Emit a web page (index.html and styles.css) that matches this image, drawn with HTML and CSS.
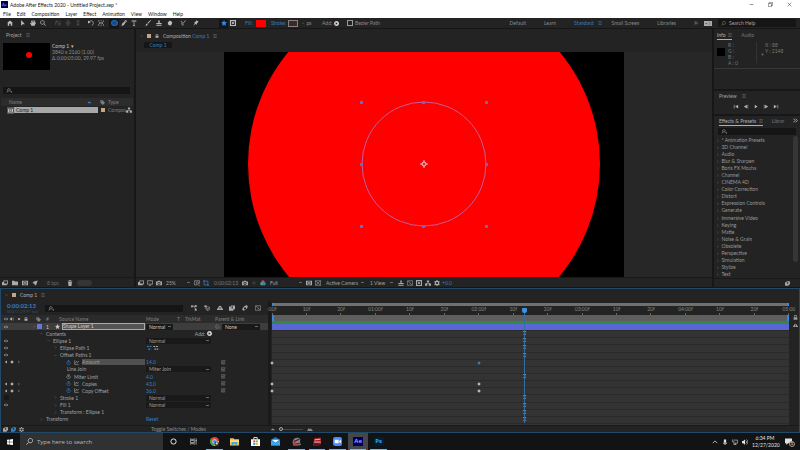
FILE: index.html
```html
<!DOCTYPE html>
<html lang="en">
<head>
<meta charset="utf-8">
<title>Adobe After Effects 2020 - Untitled Project.aep *</title>
<link rel="stylesheet" href="styles.css">
</head>
<body>
<svg class="defs" aria-hidden="true">
  <symbol id="home" viewBox="0 0 16 16"><path d="M8 1 0 8h2v7h4v-5h4v5h4V8h2z"/></symbol>
  <symbol id="arrow" viewBox="0 0 16 16"><path d="M3 0v15l4-4h6z"/></symbol>
  <symbol id="hand" viewBox="0 0 16 16"><path d="M4 15 0 8l2-1 2 2-1-7 2-.5L6.500 7 7 0h2l.5 7L12 1l2 .6L12.500 8 14 6l2 1-4 8z"/></symbol>
  <symbol id="search" viewBox="0 0 16 16"><path d="M10 1a5 5 0 1 0 .1 0zM6 10l-5 5" fill="none" stroke="currentColor" stroke-width="1.700"/></symbol>
  <symbol id="glass" viewBox="0 0 16 16"><path d="M6.500 1.500a5 5 0 1 0 .1 0zM10 10l5 5" fill="none" stroke="currentColor" stroke-width="2"/></symbol>
  <symbol id="find" viewBox="0 0 20 16"><path d="M8 2a4 4 0 1 0 .1 0zM5 9l-4 5" fill="none" stroke="currentColor" stroke-width="2"/><path d="M12 11h7l-3.500 4z"/></symbol>
  <symbol id="orbit" viewBox="0 0 16 16"><path d="M2 13V4h5M5 1v6M10 3c5 0 5 8 1 8M9 9l2 5 3-3z" fill="none" stroke="currentColor" stroke-width="2"/></symbol>
  <symbol id="cross" viewBox="0 0 16 16"><path d="M8 1v14M1 8h14M5 4l3-3 3 3M5 12l3 3 3-3" fill="none" stroke="currentColor" stroke-width="2"/></symbol>
  <symbol id="down" viewBox="0 0 16 16"><path d="M8 1v13M4 10l4 4 4-4M4 3h8" fill="none" stroke="currentColor" stroke-width="2"/></symbol>
  <symbol id="rotate" viewBox="0 0 16 16"><path d="M3 5c4-5 12-3 11 4 0 3-2 4-4 5" fill="none" stroke="currentColor" stroke-width="2"/><path d="M0 1v8l7-3z"/></symbol>
  <symbol id="pan" viewBox="0 0 16 16"><path d="M1 4V2h3M7 2h3M13 2h2v3M1 11v3h3M7 14h3M13 14h2v-3M4 8h8M6 5 3 8l3 3M10 5l3 3-3 3" fill="none" stroke="currentColor" stroke-width="1.700"/></symbol>
  <symbol id="pen" viewBox="0 0 16 16"><path d="m9 1 5 5-3 1-3 6-7 3 3-8 5-3zM10 0l2-1 5 5-2 1z"/></symbol>
  <symbol id="type" viewBox="0 0 16 16"><path d="M2 1h12v4h-1.500L12 3H9v10.500h2V15H5v-1.500h2V3H4l-.5 2H2z"/></symbol>
  <symbol id="brush" viewBox="0 0 16 16"><path d="m15 0 1 1-8 9-2-2zM5 9l2 2c0 3-3 4-6 4 2-2 1-5 4-6z"/></symbol>
  <symbol id="stamp" viewBox="0 0 16 16"><path d="M6 1h4v4l-1 3h6v3H1V8h6L6 5zM1 13h14v2H1z"/></symbol>
  <symbol id="eraser" viewBox="0 0 16 16"><path d="m7 1 7 4-1 6-5 4-6-4 1-5z"/></symbol>
  <symbol id="roto" viewBox="0 0 16 16"><path d="M2 3c3 0 4 3 3 6s1 5 5 4M15 1 7 10" fill="none" stroke="currentColor" stroke-width="2"/></symbol>
  <symbol id="pin" viewBox="0 0 16 16"><path d="m9 0 6 5-2 1-3 4 0 3-3-3-6 5 4-7-2-3h3l3-3z"/></symbol>
  <symbol id="star" viewBox="0 0 16 16"><path d="m8 0 2.300 5.400L16 6l-4.300 3.800L13 16l-5-3.200L3 16l1.300-6.200L0 6l5.700-.6z"/></symbol>
  <symbol id="mask" viewBox="0 0 16 16"><path fill-rule="evenodd" d="M0 0h16v16H0zM3 3v10h10V3z"/><circle cx="8" cy="8" r="3"/></symbol>
  <symbol id="add" viewBox="0 0 16 16"><path fill-rule="evenodd" d="M8 0a8 8 0 1 0 .1 0zM5.500 4v8l6-4z"/></symbol>
  <symbol id="menu" viewBox="0 0 16 16"><path d="M1 2h14v2H1zM1 7h14v2H1zM1 12h14v2H1z"/></symbol>
  <symbol id="more" viewBox="0 0 16 16"><path d="m1 2 6 6-6 6M8 2l6 6-6 6" fill="none" stroke="currentColor" stroke-width="3"/></symbol>
  <symbol id="open" viewBox="0 0 16 16"><path d="m2 5 6 6 6-6" fill="none" stroke="currentColor" stroke-width="2"/></symbol>
  <symbol id="shut" viewBox="0 0 16 16"><path d="m5 2 6 6-6 6" fill="none" stroke="currentColor" stroke-width="2"/></symbol>
  <symbol id="up" viewBox="0 0 16 16"><path d="m2 11 6-6 6 6" fill="none" stroke="currentColor" stroke-width="2"/></symbol>
  <symbol id="tag" viewBox="0 0 16 16"><path fill-rule="evenodd" d="M1 1h7l8 8-7 7-8-8zM4 3v3h3z"/></symbol>
  <symbol id="tree" viewBox="0 0 16 16"><path d="M5 1h6v5H5zM0 10h6v5H0zM10 10h6v5h-6zM7 6h2v2h5v2h-2V9H4v1H2V8h5z"/></symbol>
  <symbol id="comp" viewBox="0 0 16 16"><path fill-rule="evenodd" d="M0 2h16v12H0zM4 4v8h8V4z"/><circle cx="8" cy="8" r="2.500"/></symbol>
  <symbol id="footage" viewBox="0 0 16 16"><path fill-rule="evenodd" d="M4 1h12v10h-3v3H0V5h4zM6 3v6h8V3z"/></symbol>
  <symbol id="folder" viewBox="0 0 16 16"><path d="M0 2h6l2 2h8v10H0z"/></symbol>
  <symbol id="rocket" viewBox="0 0 16 16"><path d="M15 1 5 4 1 8l4 1 2 2 1 4 4-4z"/></symbol>
  <symbol id="trash" viewBox="0 0 16 16"><path d="M2 2h4V0h4v2h4v2H2zM3 5h10l-1 11H4z"/></symbol>
  <symbol id="screen" viewBox="0 0 16 16"><path d="M1 2h14v9H1zM5 15h6" fill="none" stroke="currentColor" stroke-width="2"/></symbol>
  <symbol id="camera" viewBox="0 0 16 16"><path fill-rule="evenodd" d="M0 4h4l2-2h4l2 2h4v10H0zM8 5a4 4 0 1 0 .1 0z"/><circle cx="8" cy="9" r="2"/></symbol>
  <symbol id="grid" viewBox="0 0 16 16"><path d="M1 2h14v12H1zM1 2l14 12M15 2 1 14" fill="none" stroke="currentColor" stroke-width="1.500"/></symbol>
  <symbol id="region" viewBox="0 0 16 16"><path d="M3 0v13h13M0 3h13v13" fill="none" stroke="currentColor" stroke-width="2"/></symbol>
  <symbol id="zoombox" viewBox="0 0 16 16"><path d="M15 10V2H1v11h7M9 5a3 3 0 1 0 .1 0M10 11l5 5" fill="none" stroke="currentColor" stroke-width="1.700"/></symbol>
  <symbol id="rgb" viewBox="0 0 16 16"><circle cx="8" cy="5" r="4.500" fill="#d94343"/><circle cx="5" cy="10" r="4.500" fill="#3fa86b"/><circle cx="11" cy="10" r="4.500" fill="#4a76d2"/></symbol>
  <symbol id="gear" viewBox="0 0 16 16"><path fill-rule="evenodd" d="M6.500 0h3v2l2 1 2-1 2 3-2 2v2l2 2-2 3-2-1-2 1v2h-3v-2l-2-1-2 1-2-3 2-2V7L.5 5l2-3 2 1 2-1zM8 5a3 3 0 1 0 .1 0z"/></symbol>
  <symbol id="eye" viewBox="0 0 16 16"><path fill-rule="evenodd" d="M0 8c4-7 12-7 16 0-4 7-12 7-16 0zm8-4a4 4 0 1 0 .1 0z"/><circle cx="8" cy="8" r="2"/></symbol>
  <symbol id="sound" viewBox="0 0 16 16"><path d="M0 5h3l5-4v14l-5-4H0z"/><path d="M10 4c3 2 3 6 0 8M12 1c5 4 5 10 0 14" fill="none" stroke="currentColor" stroke-width="1.500"/></symbol>
  <symbol id="lock" viewBox="0 0 16 16"><path fill-rule="evenodd" d="M3 7V4c0-5 10-5 10 0v3h1v8H2V7zM5 7h6V4c0-2.500-6-2.500-6 0z"/></symbol>
  <symbol id="dot" viewBox="0 0 16 16"><circle cx="8" cy="8" r="4.500"/></symbol>
  <symbol id="diamond" viewBox="0 0 16 16"><path d="m8 1 7 7-7 7-7-7z"/></symbol>
  <symbol id="prev" viewBox="0 0 16 16"><path d="M12 2v12L3 8z"/></symbol>
  <symbol id="next" viewBox="0 0 16 16"><path d="M4 2v12l9-6z"/></symbol>
  <symbol id="first" viewBox="0 0 16 16"><path d="M1 2h2v12H1zM15 2v12L5 8z"/></symbol>
  <symbol id="last" viewBox="0 0 16 16"><path d="M13 2h2v12h-2zM1 2v12l10-6z"/></symbol>
  <symbol id="stepb" viewBox="0 0 16 16"><path d="M13 2h2v12h-2zM11 2v12L1 8z"/></symbol>
  <symbol id="stepf" viewBox="0 0 16 16"><path d="M1 2h2v12H1zM5 2v12l10-6z"/></symbol>
  <symbol id="watch" viewBox="0 0 16 16"><path d="M8 4a5.500 5.500 0 1 0 .1 0M5 1h6M8 6v4" fill="none" stroke="currentColor" stroke-width="2"/></symbol>
  <symbol id="graph" viewBox="0 0 16 16"><path d="M2 1v13h13M5 10l3-6 3 4 4-5" fill="none" stroke="currentColor" stroke-width="2"/></symbol>
  <symbol id="link" viewBox="0 0 16 16"><path d="M8 4a4 4 0 1 0 4 4c0-8-11-7-11 0 0 9 13 9 14 1" fill="none" stroke="currentColor" stroke-width="1.700"/></symbol>
  <symbol id="expr" viewBox="0 0 16 16"><path d="M12 2H2v11h10V9M5 6h5v4H5zM10 6l5-4" fill="none" stroke="currentColor" stroke-width="2"/></symbol>
  <symbol id="flow" viewBox="0 0 16 16"><path d="M1 3h7l5 9M8 3h5" fill="none" stroke="currentColor" stroke-width="2"/><path d="M0 1h5v5H0zM11 0h4v5h-4zM10 10h5v5h-5z"/></symbol>
  <symbol id="cube" viewBox="0 0 16 16"><path d="M1 1h6v5H1z"/><path d="m10 4 5 3v5l-5 3-5-3V7zM5 7l5 3 5-3M10 10v5" fill="none" stroke="currentColor" stroke-width="1.500"/></symbol>
  <symbol id="shy" viewBox="0 0 16 16"><path fill-rule="evenodd" d="M0 13V9h3c0-9 10-9 10 0h3v4zM7 5v6h2V5z"/></symbol>
  <symbol id="blend" viewBox="0 0 16 16"><path fill-rule="evenodd" d="M5 1h11v10h-4v4H0V4h5zM7 3v6h3V3z"/></symbol>
  <symbol id="blur" viewBox="0 0 16 16"><path fill-rule="evenodd" d="M10 1c6-1 6 4 4 7s-7 7-10 7-4-4-2-7 5-6 8-7zM8 6a3 3 0 1 0 .1 0z"/></symbol>
  <symbol id="editor" viewBox="0 0 16 16"><path d="M1 2h14v12H1zM3 4c6 0 4 8 10 8" fill="none" stroke="currentColor" stroke-width="1.500"/></symbol>
  <symbol id="hill" viewBox="0 0 16 16"><path d="m0 13 5-8 3 4 2-3 6 7z"/></symbol>
  <symbol id="close" viewBox="0 0 16 16"><path d="m2 2 12 12M14 2 2 14" fill="none" stroke="currentColor" stroke-width="1.500"/></symbol>
  <symbol id="min" viewBox="0 0 16 16"><path d="M2 7.500h12v1.500H2z"/></symbol>
  <symbol id="restore" viewBox="0 0 16 16"><path d="M1 5h10v10H1zM4 5V1h11v10h-4" fill="none" stroke="currentColor" stroke-width="1.500"/></symbol>
  <symbol id="path" viewBox="0 0 32 16"><path d="M0 4h12M3 11h8" stroke="#3a80c4" stroke-width="3" stroke-dasharray="5 2"/><path d="M17 4h13M20 11h10" stroke="#aaa" stroke-width="3" stroke-dasharray="5 2"/></symbol>
</svg>

<div class="app">
  <header class="chrome">
    <div class="titlebar">
      <span class="logo">Ae</span>
      <h1>Adobe After Effects 2020 - Untitled Project.aep *</h1>
      <div class="window-controls">
        <button aria-label="Minimize"><svg><use href="#min"/></svg></button>
        <button aria-label="Restore"><svg><use href="#restore"/></svg></button>
        <button aria-label="Close"><svg><use href="#close"/></svg></button>
      </div>
    </div>
    <nav class="menubar">
      <button>File</button><button>Edit</button><button>Composition</button><button>Layer</button><button>Effect</button><button>Animation</button><button>View</button><button>Window</button><button>Help</button>
    </nav>
  </header>

  <div class="toolbar">
    <div class="tools"><button aria-label="Home"><svg><use href="#home"/></svg></button></div>
    <div class="tools">
      <button aria-label="Selection"><svg><use href="#arrow"/></svg></button>
      <button aria-label="Hand"><svg><use href="#hand"/></svg></button>
      <button aria-label="Zoom"><svg><use href="#glass"/></svg></button>
    </div>
    <div class="tools dim wide-left">
      <button aria-label="Orbit"><svg><use href="#orbit"/></svg></button>
      <button aria-label="Track"><svg><use href="#cross"/></svg></button>
      <button aria-label="Dolly"><svg><use href="#down"/></svg></button>
    </div>
    <div class="tools">
      <button aria-label="Rotate"><svg><use href="#rotate"/></svg></button>
      <button aria-label="Pan behind"><svg><use href="#pan"/></svg></button>
    </div>
    <div class="tools">
      <button class="chosen" aria-label="Ellipse"><i class="ellipse"></i></button>
      <button aria-label="Pen"><svg><use href="#pen"/></svg></button>
      <button aria-label="Type"><svg><use href="#type"/></svg></button>
    </div>
    <div class="tools spaced">
      <button aria-label="Brush"><svg><use href="#brush"/></svg></button>
      <button aria-label="Clone stamp"><svg><use href="#stamp"/></svg></button>
      <button aria-label="Eraser"><svg><use href="#eraser"/></svg></button>
    </div>
    <div class="tools far">
      <button aria-label="Roto brush"><svg><use href="#roto"/></svg></button>
      <button aria-label="Puppet pin"><svg><use href="#pin"/></svg></button>
    </div>
    <div class="shape-options">
      <div class="tools">
        <button class="chosen blue" aria-label="Tool creates shape"><svg><use href="#star"/></svg></button>
        <button aria-label="Tool creates mask"><svg><use href="#mask"/></svg></button>
      </div>
      <button class="blue fill-label">Fill:</button><button class="swatch red" aria-label="Fill color"></button>
      <button class="blue stroke-label">Stroke:</button><button class="swatch" aria-label="Stroke color"></button>
      <span class="px">- &nbsp;px</span>
      <button class="add">Add: <svg><use href="#add"/></svg></button>
      <label class="bezier"><input type="checkbox"> Bezier Path</label>
    </div>
    <nav class="workspaces">
      <button>Default</button><button>Learn</button><button class="blue">Standard</button><svg class="blue"><use href="#menu"/></svg><button>Small Screen</button><button>Libraries</button><svg><use href="#more"/></svg><span class="badge">▪ ≡</span>
    </nav>
    <label class="help-search"><svg><use href="#search"/></svg><input type="text" placeholder="Search Help" aria-label="Search Help"></label>
  </div>

  <main class="workspace">
    <section class="panel project">
      <h2 class="tab">Project <svg><use href="#menu"/></svg></h2>
      <div class="summary">
        <div class="thumb"><i></i></div>
        <p><strong>Comp 1 ▾</strong><br>3840 x 2160 (1.00)<br>Δ 0:00:05:00, 29.97 fps</p>
      </div>
      <label class="find"><svg><use href="#find"/></svg><input type="text" aria-label="Search project"></label>
      <table class="files">
        <thead><tr><th class="name-col">Name</th><th class="sort"><svg><use href="#hill"/></svg></th><th class="mark"><svg><use href="#tag"/></svg></th><th>Type</th><th class="used"></th></tr></thead>
        <tbody><tr><td colspan="2"><div class="file"><svg><use href="#comp"/></svg><span>Comp 1</span></div></td><td class="mark"><i class="sand"></i></td><td>Compos</td><td class="used"><svg><use href="#tree"/></svg></td></tr></tbody>
      </table>
      <div class="panel-foot">
        <button aria-label="Interpret footage"><svg><use href="#footage"/></svg></button>
        <button aria-label="New folder"><svg><use href="#folder"/></svg></button>
        <button aria-label="New composition"><svg><use href="#comp"/></svg></button>
        <button aria-label="Project settings"><svg><use href="#rocket"/></svg></button>
        <button class="bpc">8 bpc</button>
        <button aria-label="Delete"><svg><use href="#trash"/></svg></button>
        <i class="scroll-thumb"></i>
      </div>
    </section>

    <section class="panel composition">
      <div class="comp-tab"><span class="faint">×</span><i class="sand"></i><svg><use href="#lock"/></svg><h2>Composition <span class="blue">Comp 1</span></h2><svg class="small"><use href="#menu"/></svg></div>
      <button class="crumb blue">Comp 1</button>
      <div class="viewer">
        <svg viewBox="0 0 400 225" class="frame" role="img" aria-label="Red circle on black with a selected ellipse path">
          <rect width="400" height="225" fill="#000"/>
          <circle cx="200" cy="112" r="176" fill="#f00"/>
          <circle cx="200" cy="112" r="62" fill="none" stroke="#c060a0"/>
          <g fill="#7a62c0"><path d="M136 49h3v3h-3zM198 49h3v3h-3zM261 49h3v3h-3zM136 111h3v3h-3zM261 111h3v3h-3zM136 173h3v3h-3zM198 173h3v3h-3zM261 173h3v3h-3z"/></g>
          <path d="M200 108v8M196 112h8" stroke="#e8b8c8"/><circle cx="200" cy="112" r="2" fill="#c33" stroke="#e8c8d0"/>
        </svg>
      </div>
      <div class="viewbar">
        <div class="icons"><svg><use href="#footage"/></svg><svg><use href="#screen"/></svg><svg><use href="#camera"/></svg></div>
        <select class="zoom" aria-label="Magnification"><option>25%</option></select>
        <div class="icons"><svg><use href="#zoombox"/></svg><svg class="blue"><use href="#region"/></svg></div>
        <span class="time">0:00:02:13</span>
        <div class="icons"><svg><use href="#camera"/></svg><svg class="faint"><use href="#dot"/></svg><svg><use href="#rgb"/></svg></div>
        <select class="resolution" aria-label="Resolution"><option>Full</option></select>
        <div class="icons"><svg><use href="#comp"/></svg><svg><use href="#grid"/></svg></div>
        <select class="view" aria-label="3D view"><option>Active Camera</option></select>
        <select class="count" aria-label="Views"><option>1 View</option></select>
        <div class="icons"><svg><use href="#stamp"/></svg><svg><use href="#editor"/></svg><svg><use href="#mask"/></svg><svg><use href="#tree"/></svg><svg><use href="#gear"/></svg></div>
        <span class="blue">+0.0</span>
      </div>
    </section>

    <aside class="side">
      <section class="panel info">
        <div class="tabs"><h2 class="on">Info &nbsp;<svg><use href="#menu"/></svg></h2><button>Audio</button></div>
        <div class="readout"><i class="black"></i><p>R :<br>G :<br>B :<br>A : 0</p><p class="xy">X : 88<br>Y : 2148<b>+</b></p></div>
      </section>
      <section class="panel preview">
        <h2>Preview <svg><use href="#menu"/></svg></h2>
        <div class="transport">
          <button aria-label="First frame"><svg><use href="#first"/></svg></button><button aria-label="Previous frame"><svg><use href="#stepb"/></svg></button><button aria-label="Play"><svg><use href="#next"/></svg></button><button aria-label="Next frame"><svg><use href="#stepf"/></svg></button><button aria-label="Last frame"><svg><use href="#last"/></svg></button>
        </div>
      </section>
      <section class="panel effects">
        <div class="tabs"><h2 class="on">Effects &amp; Presets &nbsp;<svg><use href="#menu"/></svg></h2><button>Librar</button><svg class="more"><use href="#more"/></svg></div>
        <label class="find"><svg><use href="#find"/></svg><input type="text" aria-label="Search effects"></label>
        <div class="effect-scroll">
        <ul>
          <li>* Animation Presets</li><li>3D Channel</li><li>Audio</li><li>Blur &amp; Sharpen</li><li>Boris FX Mocha</li><li>Channel</li><li>CINEMA 4D</li><li>Color Correction</li><li>Distort</li><li>Expression Controls</li><li>Generate</li><li>Immersive Video</li><li>Keying</li><li>Matte</li><li>Noise &amp; Grain</li><li>Obsolete</li><li>Perspective</li><li>Simulation</li><li>Stylize</li><li>Text</li>
        </ul>
        <i class="bar"></i>
        </div>
        <div class="effects-foot"><svg><use href="#blend"/></svg></div>
      </section>
    </aside>
  </main>

  <section class="timeline">
    <div class="comp-tab"><span class="faint">×</span><i class="sand"></i><h2>Comp 1</h2><svg class="small"><use href="#menu"/></svg></div>
    <div class="timeline-body">
      <div class="outline">
        <div class="controls">
          <div class="clock"><b>0:00:02:13</b><small>00073 (29.97 fps)</small></div>
          <label class="find"><svg><use href="#find"/></svg><input type="text" aria-label="Search layers"></label>
          <div class="switches"><svg><use href="#flow"/></svg><svg><use href="#cube"/></svg><svg><use href="#shy"/></svg><svg><use href="#blend"/></svg><svg><use href="#blur"/></svg><svg><use href="#editor"/></svg></div>
        </div>
        <div class="row head">
          <div class="keys"><svg><use href="#eye"/></svg><svg><use href="#sound"/></svg><svg><use href="#dot"/></svg><svg><use href="#lock"/></svg></div>
          <div class="name"><svg><use href="#tag"/></svg><span class="num">#</span><span>Source Name</span></div>
          <div class="mode head-mode"><span>Mode</span><span>T</span><span>TrkMat</span></div>
          <div class="parent">Parent &amp; Link</div>
        </div>
        <div class="rows">
          <div class="row layer">
            <div class="keys"><svg><use href="#eye"/></svg></div>
            <div class="name"><svg class="twirl"><use href="#open"/></svg><i class="label"></i><span class="num">1</span><svg><use href="#star"/></svg><span class="title">Shape Layer 1</span></div>
            <div class="mode"><select class="short" aria-label="Blending mode"><option>Normal</option></select></div>
            <div class="parent"><svg class="muted"><use href="#link"/></svg><select aria-label="Parent"><option>None</option></select></div>
          </div>
          <div class="row"><div class="keys"></div><div class="name d1"><svg class="twirl"><use href="#open"/></svg>Contents</div><div class="mode add-cell"><button>Add: <svg><use href="#add"/></svg></button></div><div class="parent"></div></div>
          <div class="row"><div class="keys"><svg><use href="#eye"/></svg></div><div class="name d2"><svg class="twirl"><use href="#open"/></svg>Ellipse 1</div><div class="mode"><select aria-label="Ellipse mode"><option>Normal</option></select></div><div class="parent"></div></div>
          <div class="row"><div class="keys"><svg><use href="#eye"/></svg></div><div class="name d3"><svg class="twirl"><use href="#shut"/></svg>Ellipse Path 1</div><div class="mode"><svg class="direction"><use href="#path"/></svg></div><div class="parent"></div></div>
          <div class="row"><div class="keys"><svg><use href="#eye"/></svg></div><div class="name d3"><svg class="twirl"><use href="#open"/></svg>Offset Paths 1</div><div class="mode"></div><div class="parent"></div></div>
          <div class="row"><div class="keys"><svg><use href="#prev"/></svg><svg><use href="#diamond"/></svg><svg class="faint"><use href="#next"/></svg></div><div class="name d4"><svg class="blue"><use href="#watch"/></svg><svg><use href="#graph"/></svg><span class="picked">Amount</span></div><div class="mode blue">14.0</div><div class="parent"><svg class="whip"><use href="#expr"/></svg></div></div>
          <div class="row"><div class="keys"></div><div class="name d5">Line Join</div><div class="mode"><select aria-label="Line join"><option>Miter Join</option></select></div><div class="parent"><svg class="whip"><use href="#expr"/></svg></div></div>
          <div class="row"><div class="keys"></div><div class="name d4"><svg><use href="#watch"/></svg>Miter Limit</div><div class="mode blue">4.0</div><div class="parent"><svg class="whip"><use href="#expr"/></svg></div></div>
          <div class="row"><div class="keys"><svg><use href="#prev"/></svg><svg><use href="#diamond"/></svg><svg class="faint"><use href="#next"/></svg></div><div class="name d4"><svg class="blue"><use href="#watch"/></svg><svg><use href="#graph"/></svg><span>Copies</span></div><div class="mode blue">43.0</div><div class="parent"><svg class="whip"><use href="#expr"/></svg></div></div>
          <div class="row"><div class="keys"><svg><use href="#prev"/></svg><svg><use href="#diamond"/></svg><svg class="faint"><use href="#next"/></svg></div><div class="name d4"><svg class="blue"><use href="#watch"/></svg><svg><use href="#graph"/></svg><span>Copy Offset</span></div><div class="mode blue">36.0</div><div class="parent"><svg class="whip"><use href="#expr"/></svg></div></div>
          <div class="row"><div class="keys"><i class="off"></i></div><div class="name d3"><svg class="twirl"><use href="#shut"/></svg>Stroke 1</div><div class="mode"><select aria-label="Stroke mode"><option>Normal</option></select></div><div class="parent"></div></div>
          <div class="row"><div class="keys"><svg><use href="#eye"/></svg></div><div class="name d3"><svg class="twirl"><use href="#shut"/></svg>Fill 1</div><div class="mode"><select aria-label="Fill mode"><option>Normal</option></select></div><div class="parent"></div></div>
          <div class="row"><div class="keys"></div><div class="name d3"><svg class="twirl"><use href="#shut"/></svg>Transform : Ellipse 1</div><div class="mode"></div><div class="parent"></div></div>
          <div class="row"><div class="keys"></div><div class="name d1"><svg class="twirl"><use href="#shut"/></svg>Transform</div><div class="mode"><button class="blue">Reset</button></div><div class="parent"></div></div>
        </div>
      </div>

      <div class="graph">
        <div class="navigator"></div>
        <div class="ruler"><span>:00f</span><span>10f</span><span>20f</span><span>01:00f</span><span>10f</span><span>20f</span><span>02:00f</span><span>10f</span><span>20f</span><span>03:00f</span><span>10f</span><span>20f</span><span>04:00f</span><span>10f</span><span>20f</span><span>05:00</span></div>
        <div class="work-area"></div>
        <div class="cache"></div>
        <div class="tracks">
          <div class="track clip"></div>
          <div class="track cti"></div><div class="track cti"></div><div class="track cti"></div><div class="track cti"></div>
          <div class="track"><svg class="key" style="left:0%"><use href="#diamond"/></svg><svg class="key blue" style="left:40%"><use href="#diamond"/></svg></div>
          <div class="track"></div>
          <div class="track cti"></div>
          <div class="track"><svg class="key" style="left:0%"><use href="#diamond"/></svg><svg class="key" style="left:40%"><use href="#diamond"/></svg></div>
          <div class="track"><svg class="key" style="left:0%"><use href="#diamond"/></svg><svg class="key" style="left:40%"><use href="#diamond"/></svg></div>
          <div class="track cti"></div><div class="track cti"></div><div class="track cti"></div><div class="track cti"></div>
        </div>
        <div class="playhead" style="left:48.7%"><i></i></div>
      </div>
      <div class="gutter"><svg><use href="#lock"/></svg><svg><use href="#shy"/></svg></div>
    </div>
    <div class="timeline-foot">
      <div class="foot-left"><div class="icons"><svg><use href="#blend"/></svg><svg class="blue"><use href="#blend"/></svg><svg><use href="#gear"/></svg></div><button>Toggle Switches / Modes</button></div>
      <div class="zoomer"><svg class="tiny"><use href="#hill"/></svg><input type="range" value="2" aria-label="Timeline zoom"><svg><use href="#hill"/></svg></div>
    </div>
  </section>

  <footer class="taskbar">
    <button class="start" aria-label="Start"><svg viewBox="0 0 16 16"><path d="M0 2l7-1v6.500H0zM8 1l8-1v7.500H8zM0 8.500h7V15l-7-1zM8 8.500h8V16l-8-1z"/></svg></button>
    <label class="task-search"><svg><use href="#search"/></svg><input type="text" placeholder="Type here to search" aria-label="Type here to search"></label>
    <div class="apps">
      <button aria-label="Cortana"><svg viewBox="0 0 16 16"><circle cx="8" cy="8" r="6" fill="none" stroke="#fff" stroke-width="2"/></svg></button>
      <button aria-label="Task view"><svg viewBox="0 0 16 16"><path d="M1 1v2h9V1M1 15v-2h9v2M1 5.500h9v5H1zM14 1v14M12.500 6h3" fill="none" stroke="#ddd" stroke-width="1.500"/></svg></button>
      <button class="running" aria-label="Chrome"><svg viewBox="0 0 16 16"><circle cx="8" cy="8" r="8" fill="#e04a3a"/><path d="M1 4a8 8 0 0 0 6 12l4-7-6 0z" fill="#35a556"/><path d="M16 7a8 8 0 0 1-9 9l4-9z" fill="#f4c532"/><circle cx="8" cy="8" r="3.500" fill="#4a86e8" stroke="#fff"/><circle cx="12" cy="12" r="4" fill="#333"/><circle cx="12" cy="11.500" r="2" fill="#ddd"/></svg></button>
      <button aria-label="File Explorer"><svg viewBox="0 0 16 16"><path d="M0 2h6l2 2h8v11H0z" fill="#f2c34c"/><path d="M0 6h16v3H0z" fill="#ffe08a"/><path d="M3 9h10v6h-3v-3H6v3H3z" fill="#4aa3df"/></svg></button>
      <button aria-label="Store"><svg viewBox="0 0 16 16"><path d="M5 4V1h6v3" fill="none" stroke="#fff" stroke-width="1.500"/><path d="M0 4h16v12H0z" fill="#fff"/><path d="M4 6h3.500v3.500H4z" fill="#e05238"/><path d="M8.500 6H12v3.500H8.500z" fill="#79b829"/><path d="M4 10.500h3.500V14H4z" fill="#22a0e0"/><path d="M8.500 10.500H12V14H8.500z" fill="#f3b420"/></svg></button>
      <button aria-label="Mail"><svg viewBox="0 0 16 16"><path d="M0 5l8-5 8 5v10H0z" fill="#1479c9"/><path d="M1 5h14l-7 5z" fill="#e8f5ff"/><path d="M0 6l8 5 8-5v9H0z" fill="#37a7ee"/></svg></button>
      <button class="running" aria-label="Media tool"><svg viewBox="0 0 16 16"><path d="M1 9c1-8 10-10 14-5l-1 5 2 5-5 1H2z" fill="#8d8080"/><path d="M3 8l10-4M4 12h10" stroke="#421414" stroke-width="2"/><circle cx="5" cy="12" r="3" fill="#c43737"/></svg></button>
      <button class="running" aria-label="Recorder"><svg viewBox="0 0 16 16"><path d="M2 2l12-1v12l-3 2H0z" fill="#a72328"/><path d="M3 5l10-1M2 9h12" stroke="#e6cccc" stroke-width="1.500"/><path d="M2 11h10v4H1z" fill="#5b1518"/></svg></button>
      <button class="running" aria-label="Zoom"><svg viewBox="0 0 16 16"><rect width="16" height="16" rx="4" fill="#4a8cff"/><path d="M3 5h7v6H4l-1-1zM11 7l3-2v6l-3-2z" fill="#fff"/></svg></button>
      <button class="running current" aria-label="After Effects"><span class="adobe ae">Ae</span></button>
      <button class="running" aria-label="Photoshop"><span class="adobe ps">Ps</span></button>
    </div>
    <div class="tray">
      <svg><use href="#up"/></svg>
      <svg viewBox="0 0 16 16"><path d="M5 1h6v9H5zM3 8c0 5 10 5 10 0v4l-4 2v2H7v-2l-4-2z"/></svg>
      <svg viewBox="0 0 16 16"><path d="M4 3h11v8H6M9 11v4M5 15h7M1 1v6h4v8" fill="none" stroke="currentColor" stroke-width="1.500"/></svg>
      <svg><use href="#sound"/></svg>
      <time>6:34 PM<br>12/27/2020</time>
      <button class="notes" aria-label="1 notification"><svg viewBox="0 0 16 16"><path d="M0 1h16v11H7l-4 4v-4H0z"/></svg><b>1</b></button>
    </div>
  </footer>
</div>
</body>
</html>
```

FILE: styles.css
```css
* { box-sizing: border-box; }
body {
  margin: 0;
  background: #151515;
  color: #a2a2a2;
  font: 5px/6px Lato, "Open Sans", sans-serif;
}
h1, h2, p, ul { margin: 0; padding: 0; font: inherit; list-style: none; }
button, input, select {
  margin: 0; padding: 0; border: 0; background: none;
  color: inherit; font: inherit; appearance: none; border-radius: 0;
}
input:focus { outline: none; }
svg { width: 6px; height: 6px; flex: none; fill: currentColor; }
.defs { position: absolute; width: 0; height: 0; }
.blue { color: #347fc4; }
.faint { color: #555; }
.sand { width: 4px; height: 4px; background: #c5a582; }

.app { display: flex; flex-direction: column; height: 100vh; }

/* Window frame */
.chrome { background: #fff; color: #222; height: 18px; flex: none; }
.titlebar { display: flex; align-items: center; height: 9px; padding-left: 1px; }
.logo { width: 7px; height: 7px; margin-right: 2px; background: #00005b; color: #99f; font-size: 4px; line-height: 7px; text-align: center; }
.window-controls { display: flex; margin-left: auto; padding-right: 8px; gap: 14px; }
.window-controls svg { width: 5px; height: 5px; display: block; }
.menubar { display: flex; gap: 6px; padding-left: 3px; height: 9px; align-items: center; }

/* Tools */
.toolbar { display: flex; align-items: center; flex: none; height: 11px; padding: 0 4px 0 5px; background: #232323; border-bottom: 1px solid #161616; color: #8c8c8c; }
.tools { display: flex; margin-right: 3px; color: #bdbdbd; }
.tools button { display: grid; place-items: center; width: 10px; height: 9px; }
.tools.dim { color: #555; }
.wide-left { margin-left: 2px; }
.spaced { gap: 1px; margin-left: 1px; }
.far { gap: 3px; }
.tools .chosen { background: #151515; }
.tools .blue { color: #2d8ceb; }
.ellipse { width: 7px; height: 6px; border-radius: 50%; background: #174a8c; border: 1px solid #2867b5; }
.shape-options { display: flex; align-items: center; margin-left: 15px; }
.shape-options .tools { margin-right: 8px; }
.shape-options .tools button { width: 9px; }
.fill-label { width: 11px; text-align: left; }
.stroke-label { width: 17px; text-align: left; }
.swatch { width: 10px; height: 7px; border: 1px solid #898080; background: #3a2a2a; }
.swatch.red { background: #f00; border-color: #f00; margin-right: 5px; }
.px { margin-left: 4px; width: 20px; }
.add { display: flex; align-items: center; gap: 2px; width: 25px; white-space: nowrap; }
.add svg, .add-cell svg { width: 5px; height: 5px; color: #ccc; }
.bezier { display: flex; align-items: center; gap: 2px; white-space: nowrap; }
.bezier input { width: 6px; height: 6px; border: 1px solid #999; }
.workspaces { display: flex; align-items: center; margin-left: auto; gap: 18px; white-space: nowrap; }
.workspaces svg { width: 4px; height: 4px; }
.workspaces svg.blue { margin: 0 -8px 0 -14px; }
.badge { width: 8px; height: 5px; margin: 0 6px 0 -12px; background: #aaa; color: #333; font-size: 4px; line-height: 5px; text-align: center; }
.help-search { display: flex; align-items: center; gap: 3px; width: 78px; height: 8px; padding-left: 3px; background: #161616; }
.help-search svg { width: 5px; height: 5px; }
.help-search input { width: 60px; }
::placeholder { color: #a2a2a2; opacity: 1; }

/* Panels */
.workspace { display: grid; grid-template: minmax(0, 1fr) / 134px 1fr 86px; gap: 2px; flex: 1; min-height: 0; background: #171717; }
.panel { display: flex; flex-direction: column; min-width: 0; min-height: 0; background: #232323; }
h2 svg, .small { width: 4px; height: 4px; color: #777; }
.tab { padding: 3px 0 0 6px; height: 14px; }
.tab svg { margin-left: 3px; }
.summary { display: flex; gap: 2px; height: 44px; padding-left: 3px; white-space: nowrap; color: #8c8c8c; }
.summary strong { font-weight: normal; color: #c2c2c2; }
.thumb { display: grid; place-items: center; width: 47px; height: 27px; background: #000; }
.thumb i { width: 6px; height: 6px; margin: 0 0 4px 5px; border-radius: 50%; background: #f00; }
.find { display: flex; align-items: center; gap: 3px; height: 7px; padding-left: 3px; background: #151515; }
.find svg { width: 7px; height: 5px; color: #aaa; }
.find input { flex: 1; min-width: 0; }
.project .find { margin: 0 4px 4px 3px; }
.files { width: calc(100% - 2px); margin-left: 1px; border-collapse: collapse; table-layout: fixed; color: #808080; font: 5px/6px Lato, sans-serif; }
.files th, .files td { padding: 0; height: 8px; font-weight: normal; text-align: left; overflow: hidden; vertical-align: middle; }
.files thead { background: #2c2c2c; }
.files .name-col { width: 86px; padding-left: 8px; }
.sort { width: 11px; }
.sort svg { width: 5px; height: 4px; color: #347fc4; }
.mark { width: 10px; }
.mark svg { width: 5px; height: 5px; display: block; margin-left: 2px; }
.mark .sand { display: block; margin-left: 3px; }
.files .used { width: 7px; }
.used svg { width: 6px; height: 6px; display: block; color: #aaa; }
.file { display: flex; align-items: center; padding-left: 6px; }
.file svg { width: 7px; height: 7px; padding: 1px; background: #555; color: #bbb; }
.file span { flex: 1; padding-left: 2px; background: #a8a8a8; color: #222; }
.panel-foot { display: flex; align-items: center; gap: 4px; height: 10px; margin-top: auto; padding-left: 2px; border-top: 1px solid #191919; color: #aaa; }
.panel-foot button { display: flex; }
.panel-foot .bpc { margin: 0 4px 0 5px; color: #686868; }
.scroll-thumb { width: 15px; height: 6px; border-radius: 3px; background: #353535; }

.comp-tab { display: flex; align-items: center; gap: 4px; height: 13px; padding-left: 4px; color: #b0b0b0; flex: none; }
.comp-tab svg { width: 4px; height: 4px; }
.crumb { align-self: flex-start; width: 28px; height: 6px; margin: 0 0 4px 8px; background: #161616; }
.viewer { flex: 1; display: flex; min-height: 0; background: #272727; }
.frame { flex: 1; width: 100%; height: 100%; min-width: 0; overflow: hidden; }
.viewbar { display: flex; align-items: center; flex: none; height: 10px; padding-left: 2px; border-top: 1px solid #191919; white-space: nowrap; }
.icons { display: flex; gap: 3px; color: #a8a8a8; }
.icons .blue { color: #347fc4; }
.icons .faint { color: #3a3a3a; }
select { background: linear-gradient(#686868, #686868) no-repeat right 2px center / 3px 1px; }
.zoom { width: 26px; margin: 0 2px 0 4px; }
.time { width: 28px; margin-left: 5px; color: #777; }
.resolution { width: 34px; margin: 0 2px 0 4px; }
.view { width: 40px; margin-left: 5px; }
.count { width: 25px; margin: 0 3px 0 4px; }
.viewbar .blue { margin-left: 2px; }
.viewbar .icons .blue { margin: 0; }

.side { display: flex; flex-direction: column; gap: 2px; min-height: 0; }
.tabs { display: flex; gap: 9px; height: 11px; padding: 3px 0 0 3px; white-space: nowrap; color: #777; flex: none; }
.tabs button { align-self: flex-start; }
.tabs .on { border-bottom: 1px solid #b0b0b0; height: 8px; color: #b0b0b0; }
.info { height: 60px; }
.readout { display: flex; gap: 3px; height: 29px; padding: 2px 0 0 3px; border-bottom: 1px solid #373737; color: #777; }
.black { width: 8px; height: 8px; margin-top: 6px; background: #000; }
.readout p { width: 29px; height: 21px; border-right: 1px solid #333; }
.readout .xy { position: relative; border: 0; padding-left: 5px; }
.xy b { position: absolute; left: 1px; top: 9px; }
.preview { height: 23px; padding: 2px 0 0 5px; }
.preview h2 svg { margin-left: 4px; }
.transport { display: flex; gap: 4px; padding: 5px 0 0 14px; color: #b0b0b0; }
.transport svg { width: 6px; height: 5px; display: block; }
.effects { flex: 1; }
.effects .tabs { gap: 9px; height: 12px; padding: 2px 0 0 5px; }
.effects .more { width: 5px; height: 5px; margin: 0 2px 0 auto; color: #aaa; }
.effects .find { margin: 0 4px 1px; flex: none; }
.effect-scroll { flex: 1; display: flex; justify-content: space-between; min-height: 0; }
.effects ul { display: flex; flex-direction: column; padding-left: 3px; color: #999; }
.effects li { flex: 1; display: flex; align-items: center; gap: 3px; white-space: nowrap; }
.effects li::before { content: "›"; color: #777; }
.bar { width: 5px; height: 126px; margin-right: 2px; border-radius: 3px; background: #363636; }
.effects-foot { display: flex; justify-content: flex-end; align-items: center; flex: none; height: 9px; padding-right: 10px; border-top: 1px solid #191919; }
.effects-foot svg { width: 5px; height: 5px; }

/* Timeline */
.timeline { display: flex; flex-direction: column; flex: none; height: 145px; margin-top: 1px; border: 1px solid #20496a; background: #232323; }
.timeline .comp-tab { height: 12px; }
.timeline-body { flex: 1; display: grid; grid-template: minmax(0, 1fr) / 270px 1fr 10px; min-height: 0; }
.outline { display: flex; flex-direction: column; min-width: 0; border-right: 3px solid #1a1a1a; }
.controls { display: flex; align-items: center; flex: none; height: 14px; padding-left: 6px; }
.clock { display: flex; flex-direction: column; width: 38px; color: #347fc4; white-space: nowrap; }
.clock b { font-size: 6px; line-height: 6px; }
.clock small { font-size: 4px; line-height: 5px; color: #2b4f72; }
.controls .find { width: 138px; }
.switches { display: flex; justify-content: space-between; flex: 1; padding: 0 7px 0 8px; color: #aaa; }
.row { display: grid; grid-template-columns: 32px 112px 67px 1fr; align-items: center; white-space: nowrap; }
.row > div { display: flex; align-items: center; min-width: 0; height: 6px; }
.head { flex: none; height: 8px; background: #2b2b2b; color: #808080; }
.rows, .tracks { flex: 1; display: flex; flex-direction: column; padding-bottom: 2px; min-height: 0; }
.rows .row, .track { flex: 1; min-height: 0; }
.rows .layer { background: #3d3d3d; color: #ccc; }
.row .keys { gap: 2px; padding-left: 3px; color: #b0b0b0; }
.keys svg { width: 4px; height: 4px; }
.keys svg + svg { margin-right: 1px; }
.off { width: 5px; height: 5px; background: #181818; }
.name svg { width: 5px; height: 5px; }
.head .name { padding-left: 3px; }
.head .num { margin-left: 5px; width: 13px; }
.row .name.d1 { padding-left: 7px; }
.row .name.d2 { padding-left: 14px; }
.row .name.d3 { padding-left: 21px; }
.row .name.d4 { padding-left: 33px; gap: 3px; }
.row .name.d5 { padding-left: 34px; }
.name .twirl { width: 3px; height: 3px; margin-right: 3px; color: #888; }
.label { width: 5px; height: 5px; background: #6a75dc; }
.layer .num { width: 13px; padding-left: 4px; }
.layer .twirl { margin-right: 1px; }
.layer .title { flex: 1; margin-left: 2px; border: 1px solid #aaa; background: #555; line-height: 5px; }
.picked { flex: 1; background: #505050; color: #999; }
.row .mode { padding-left: 1px; }
.mode select { width: 65px; height: 6px; padding-left: 3px; background-color: #191919; }
.mode .short { width: 27px; }
.head-mode span:nth-child(1) { width: 31px; }
.head-mode span:nth-child(2) { width: 8px; }
.direction { width: 14px; height: 6px; }
.row .add-cell { justify-content: flex-end; }
.add-cell button { display: flex; gap: 2px; align-items: center; }
.row .parent { padding-left: 3px; gap: 2px; }
.parent select { width: 38px; height: 6px; padding-left: 3px; background-color: #191919; }
.parent svg { width: 5px; height: 5px; }
.whip { margin-left: 6px; color: #777; }
.layer .muted { color: #777; }

.graph { position: relative; display: flex; flex-direction: column; margin-left: 1px; padding-top: 2px; min-height: 0; }
.navigator, .ruler, .work-area, .cache { flex: none; }
.navigator { height: 3px; background: #707070; border-left: 2px solid #2d8ceb; border-right: 2px solid #2d8ceb; }
.ruler { display: flex; justify-content: space-between; height: 9px; padding-top: 1px; color: #858585; }
.ruler span { position: relative; display: flex; justify-content: center; width: 0; font-size: 5px; line-height: 5px; }
.ruler span::after { content: ""; position: absolute; bottom: 0; width: 1px; height: 2px; background: #666; }
.work-area { height: 6px; background: #5e5e5e; border-left: 2px solid #2d8ceb; border-right: 2px solid #2d8ceb; }
.cache { height: 3px; background: #2f8a49; }
.tracks { background: #333; padding-bottom: 1px; }
.track { position: relative; border-bottom: 1px solid #2a2a2a; }
.clip { background: #5a66d3; }
.key { position: absolute; top: 1px; width: 4px; height: 4px; margin-left: -2px; color: #bbb; }
.key.blue { color: #347fc4; }
.cti::after { content: "I"; position: absolute; left: 48.7%; top: 0; width: 3px; margin-left: -1px; color: #aaa; font: bold 6px/6px "Liberation Mono", monospace; }
.playhead { position: absolute; top: 8px; bottom: 2px; width: 1px; background: #326e9f; }
.playhead i { position: absolute; left: -2px; top: -1px; width: 5px; height: 5px; border-radius: 1px 1px 3px 3px; background: #3c92df; }
.gutter { display: flex; flex-direction: column; align-items: center; gap: 3px; padding: 14px 0 0 3px; color: #999; }
.gutter svg { width: 5px; height: 5px; }
.timeline-foot { display: grid; grid-template-columns: 270px 1fr; flex: none; height: 7px; border-top: 1px solid #191919; color: #8a8a8a; }
.foot-left { display: flex; align-items: center; gap: 127px; padding-left: 2px; }
.foot-left svg { width: 5px; height: 5px; }
.zoomer { display: flex; align-items: center; gap: 4px; }
.zoomer .tiny { width: 4px; height: 4px; }
.zoomer input { width: 24px; height: 5px; background: linear-gradient(#444, #444) center / 100% 1px no-repeat; }
.zoomer input::-webkit-slider-thumb { appearance: none; width: 4px; height: 4px; border: 1px solid #aaa; border-radius: 50%; background: #232323; }

/* Desktop bar */
.taskbar { display: flex; flex: none; height: 17px; background: #121314; color: #e0e0e0; }
.start { width: 20px; display: grid; place-items: center; }
.start svg { color: #fff; }
.task-search { display: flex; align-items: center; gap: 4px; width: 143px; padding-left: 6px; background: #303132; font: 6px/8px "Open Sans", sans-serif; }
.task-search ::placeholder { color: #bbb; }
.task-search svg { width: 7px; height: 7px; }
.task-search input { width: 110px; }
.apps { display: grid; grid-template-columns: repeat(11, 1fr); width: 226px; }
.apps button { display: grid; place-items: center; border-bottom: 1px solid transparent; }
.apps svg { width: 9px; height: 9px; }
.apps button:nth-child(-n+2) svg { width: 7px; height: 7px; }
.apps .running { border-image: linear-gradient(90deg, transparent 12%, #76b9d6 12%, #76b9d6 88%, transparent 88%) 1; }
.apps .current { background: #46474b; }
.adobe { width: 10px; height: 9px; font: bold 6px/9px "Open Sans", sans-serif; }
.ae { background: #00005b; color: #9999ff; }
.ps { background: #001e36; color: #31a8ff; }
.tray { display: flex; align-items: center; gap: 4px; margin-left: auto; padding-right: 8px; }
.tray svg { width: 6px; height: 6px; }
.tray time { width: 26px; line-height: 7px; text-align: center; }
.notes { position: relative; display: flex; margin-left: 3px; }
.tray .notes svg { width: 7px; height: 7px; }
.notes b { position: absolute; left: 4px; top: 3px; width: 6px; height: 6px; border: 1px solid #999; border-radius: 50%; background: #222; font-size: 4px; line-height: 4px; }
```
